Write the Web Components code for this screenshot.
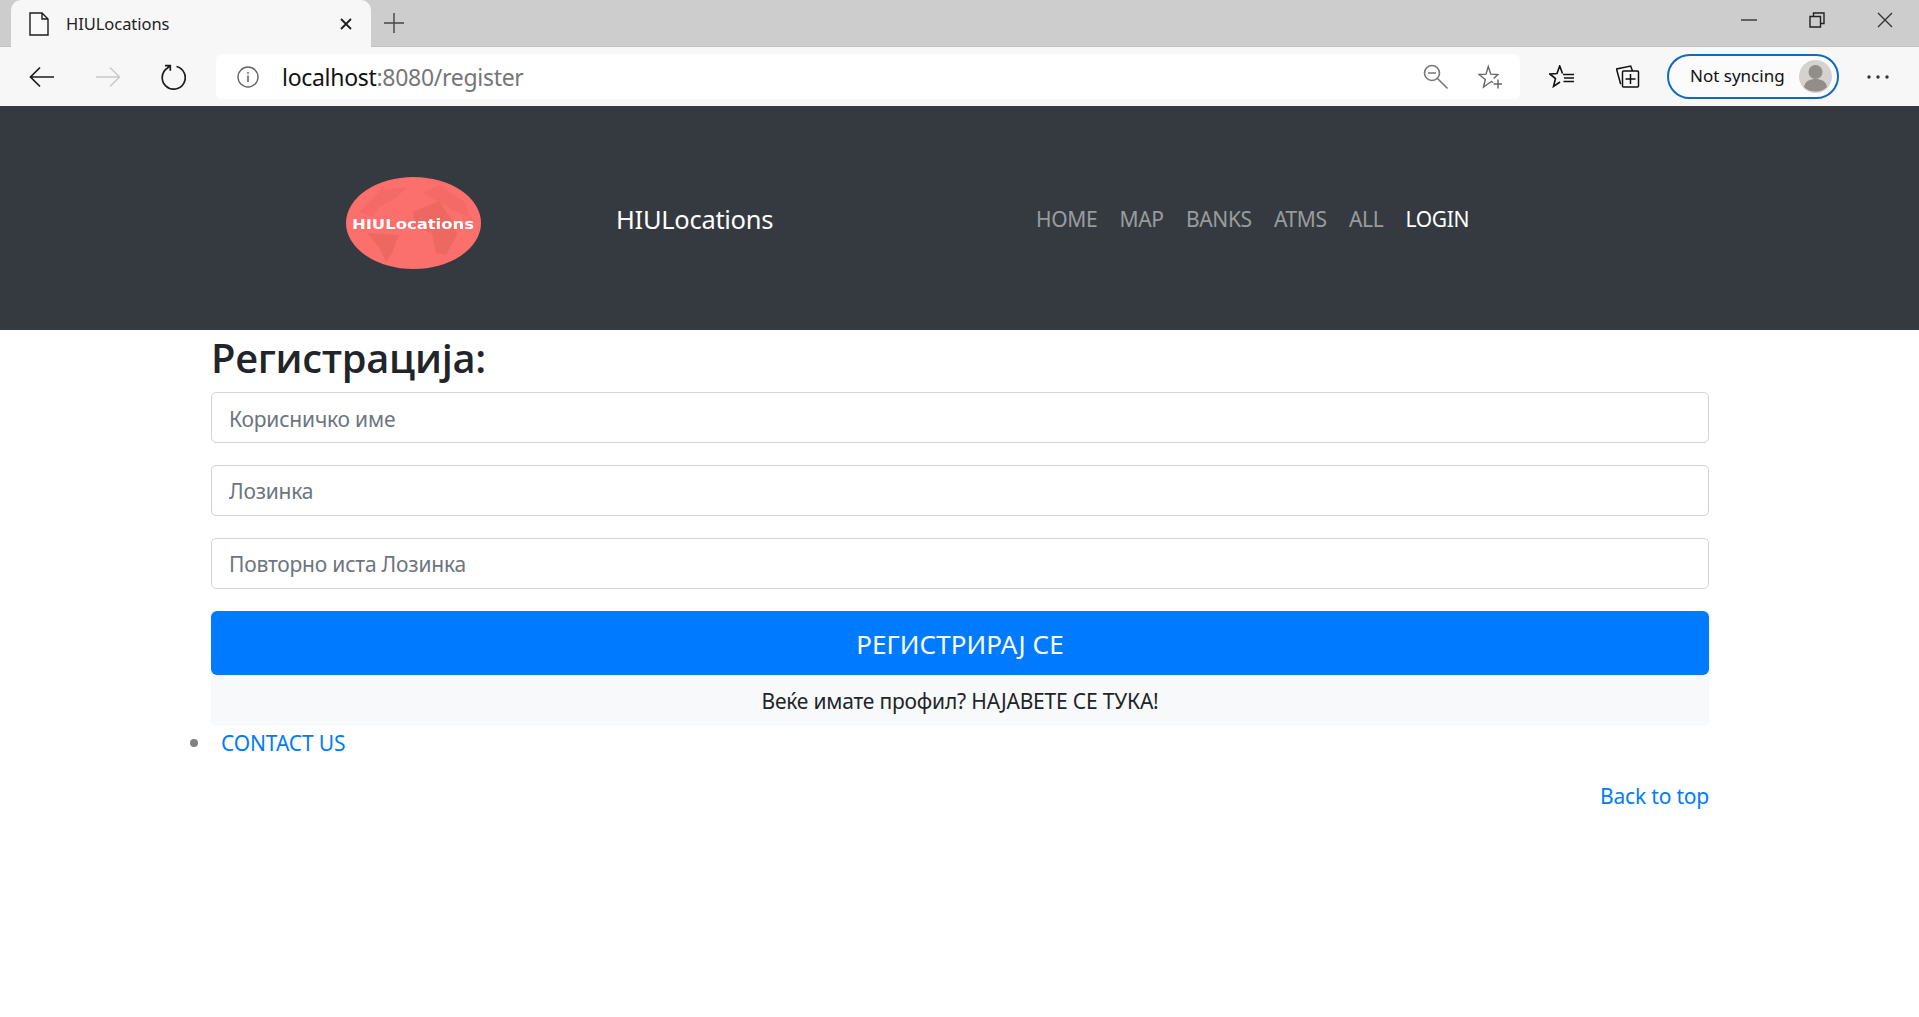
<!DOCTYPE html>
<html>
<head>
<meta charset="utf-8">
<title>HIULocations</title>
<style>
    html, body { margin: 0; padding: 0; background: #fff; }
    body { font-family: "Noto Sans", "Open Sans", sans-serif; color: #212529; overflow: hidden; height: 1017px; }
</style>
</head>
<body>
<browser-chrome></browser-chrome>
<site-nav></site-nav>
<main-page>
    <register-form></register-form>
    <page-footer></page-footer>
</main-page>

<script>
const browserChromeTemplate = document.createElement('template');
browserChromeTemplate.innerHTML = `
<style>
    :host { display: block; height: 106px; background: #f7f7f7; color: #111; }
    svg { display: block; fill: none; stroke: #1c1c1c; stroke-width: 1.4; }
    .strip {
        height: 47px;
        display: flex;
        align-items: flex-end;
        padding-left: 11px;
        background: #cdcdcd;
        border-bottom: 1px solid #c2c2c2;
        box-sizing: border-box;
    }
    .tab {
        width: 360px;
        height: 47px;
        margin-bottom: -1px;
        box-sizing: border-box;
        padding: 0 18px 0 18px;
        display: flex;
        align-items: center;
        background: #f7f7f7;
        border-radius: 10px 10px 0 0;
    }
    .title { margin-left: 17px; flex: 1; font-size: 16.500px; color: #222; letter-spacing: -0.05px; }
    .plus { margin-left: 12px; align-self: center; }
    .win { margin-left: auto; display: flex; align-self: flex-start; }
    .win div { width: 68px; height: 40px; display: flex; align-items: center; justify-content: center; }
    .bar {
        height: 59px;
        display: flex;
        align-items: center;
    }
    .nav-btn { width: 66px; display: flex; justify-content: center; }
    .first { margin-left: 9px; }
    .reload { margin-left: -1px; margin-right: 1px; }
    .url {
        margin-left: 9px;
        width: 1304px;
        height: 45px;
        background: #fff;
        border-radius: 6px;
        display: flex;
        align-items: center;
        box-sizing: border-box;
        padding: 0 18px 0 21px;
    }
    .addr { margin-left: 23px; font-size: 23px; color: #111; flex: 1; letter-spacing: -0.3px; }
    .addr span { color: #767676; }
    .url svg + svg { margin-left: 29px; }
    .tool { width: 66px; display: flex; justify-content: center; }
    .pill {
        margin-left: 6px;
        width: 172px;
        height: 45px;
        box-sizing: border-box;
        border: 2px solid #0f6cbd;
        border-radius: 23px;
        display: flex;
        align-items: center;
        justify-content: space-between;
        padding: 0 5px 0 21px;
        font-size: 17px;
        color: #111;
        background: #fbfbfb;
    }
    .pill span { margin-bottom: 2px; }
    .more { margin-left: 28px; }
</style>
<div class="strip">
    <div class="tab">
        <svg width="20" height="24" viewBox="0 0 20 24"><path d="M1 1h12l6 6v16H1zM13 1v6h6" fill="#fafafa"/></svg>
        <span class="title">HIULocations</span>
        <svg width="14" height="14" viewBox="0 0 14 14" style="stroke-width:1.8"><path d="M2 2l10 10M12 2L2 12"/></svg>
    </div>
    <svg class="plus" width="22" height="22" viewBox="0 0 22 22" style="stroke:#444"><path d="M11 1v20M1 11h20"/></svg>
    <div class="win">
        <div><svg width="16" height="4" viewBox="0 0 16 4" style="stroke:#333"><path d="M0 2h16"/></svg></div>
        <div><svg width="16" height="16" viewBox="0 0 16 16" style="stroke:#222"><path d="M1 4.5h10.5V15H1zM4.5 4.500V1H15v10.500h-3.500"/></svg></div>
        <div><svg width="16" height="16" viewBox="0 0 16 16" style="stroke:#333"><path d="M1 1l14 14M15 1L1 15"/></svg></div>
    </div>
</div>
<div class="bar">
    <div class="nav-btn first"><svg width="26" height="22" viewBox="0 0 26 22"><path d="M25 11H2M11 1.500L1.500 11l9.500 9.500" style="stroke-width:1.700"/></svg></div>
    <div class="nav-btn"><svg width="26" height="22" viewBox="0 0 26 22" style="stroke:#c9c9c9"><path d="M1 11h23M15 1.500l9.500 9.500-9.500 9.500"/></svg></div>
    <div class="nav-btn reload"><svg width="26" height="28" viewBox="0 0 26 28" style="stroke-width:1.700"><path d="M16.500 3.500A11.500 11.500 0 1 1 7.500 5L10.300 2.700M5 2.700h5.300v5"/></svg></div>
    <div class="url">
        <svg width="22" height="22" viewBox="0 0 22 22" style="stroke:#666"><circle cx="11" cy="11" r="10"/><path d="M11 9.500V16M11 6v1.800" style="stroke-width:1.600"/></svg>
        <div class="addr">localhost<span>:8080/register</span></div>
        <svg width="26" height="26" viewBox="0 0 26 26" style="stroke:#777;stroke-width:1.600"><circle cx="9" cy="9" r="7.500"/><path d="M5 9h8M14.500 14.500l10 10"/></svg>
        <svg width="24" height="26" viewBox="0 0 24 26" style="stroke:#666;stroke-width:1.400"><path d="M15 18.500l-1.500-1-3.700 2.500-4.300 3 1.800-7.500L1 10.500l7-.4L10.300 2.500l2.500 7.600 7 .4-4 4"/><path d="M20 15.500v9M15.500 20h9"/></svg>
    </div>
    <div class="tool" style="margin-left:9px"><svg width="26" height="24" viewBox="0 0 26 24" style="stroke:#111;stroke-width:1.600"><path d="M13.500 8.500L10.700 1 8 8.500l-7.200.5 5.700 4.500-2 8 6.500-4.500"/><path d="M14 9.500h11M15 13h10M14.500 16.500h10.500"/></svg></div>
    <div class="tool"><svg width="24" height="24" viewBox="0 0 24 24" style="stroke:#111;stroke-width:1.500"><path d="M4.700 19.300L.5 4 14.700 1l1.800 5"/><rect x="6.500" y="6" width="16" height="16" rx="1"/><path d="M14.500 9v10M9.500 14h10"/></svg></div>
    <div class="pill">
        <span>Not syncing</span>
        <svg width="33" height="33" viewBox="0 0 33 33" style="stroke:none"><circle cx="16.500" cy="16.500" r="16.500" fill="#d3d2ce"/><circle cx="16.500" cy="12" r="7" fill="#918d88"/><path d="M5 27c1-6 6-8 11.500-8S27 21 28 27c-3 3-7 4.500-11.500 4.500S8 30 5 27z" fill="#918d88"/></svg>
    </div>
    <svg class="more" width="22" height="4" viewBox="0 0 22 4" style="stroke:none;fill:#333"><circle cx="2" cy="2" r="1.700"/><circle cx="11" cy="2" r="1.700"/><circle cx="20" cy="2" r="1.700"/></svg>
</div>
`;

class BrowserChrome extends HTMLElement {
    connectedCallback() {
        const shadowRoot = this.attachShadow({ mode: 'open' });
        shadowRoot.appendChild(browserChromeTemplate.content.cloneNode(true));
    }
}
customElements.define('browser-chrome', BrowserChrome);

const siteNavTemplate = document.createElement('template');
siteNavTemplate.innerHTML = `
<style>
    :host {
        display: flex;
        align-items: center;
        height: 224px;
        padding-left: 345px;
        box-sizing: border-box;
        background: #343a40;
        font-size: 21px;
    }
    svg { display: block; margin-top: 9px; }
    .brand { margin: 2px 0 0 134px; font-size: 25.500px; color: #fff; letter-spacing: -0.3px; }
    ul { display: flex; gap: 22.200px; margin: 2px 0 0 263px; padding: 0; list-style: none; letter-spacing: -0.35px; }
    a { color: rgba(255,255,255,.5); text-decoration: none; }
    a.on { color: #fff; }
</style>
<svg width="137" height="94" viewBox="0 0 137 94">
    <defs><filter id="soft"><feGaussianBlur stdDeviation=".4"/></filter></defs>
    <ellipse cx="68.500" cy="47" rx="67.500" ry="46" fill="#fb706c"/>
    <g filter="url(#soft)">
        <path fill="#f36b66" d="M14 36L36 14l26-3-11 11-17 9-7 10z"/>
        <path fill="#f36b66" d="M77 17l17-8 27 18 3 14-17-7-13-8z"/>
        <path fill="#ec6861" d="M68 36l26-11 15 22 3 12-11 20-10-2-4-20-18-6z"/>
        <path fill="#ec6861" d="M22 57l32 2-7 18-6 9-7-15z"/>
    </g>
    <text x="7" y="52.500" textLength="122" lengthAdjust="spacingAndGlyphs" filter="url(#soft)" font-family="DejaVu Sans" font-weight="700" font-size="14" fill="#fff">HIULocations</text>
</svg>
<span class="brand">HIULocations</span>
<ul>
    <li><a href="#">HOME</a></li>
    <li><a href="#">MAP</a></li>
    <li><a href="#">BANKS</a></li>
    <li><a href="#">ATMS</a></li>
    <li><a href="#">ALL</a></li>
    <li><a class="on" href="#">LOGIN</a></li>
</ul>
`;

class SiteNav extends HTMLElement {
    connectedCallback() {
        const shadowRoot = this.attachShadow({ mode: 'open' });
        shadowRoot.appendChild(siteNavTemplate.content.cloneNode(true));
    }
}
customElements.define('site-nav', SiteNav);

const mainPageTemplate = document.createElement('template');
mainPageTemplate.innerHTML = `
<style>
    :host { display: block; width: 1498px; margin: 0 0 0 211px; }
</style>
<slot></slot>
`;

class MainPage extends HTMLElement {
    connectedCallback() {
        const shadowRoot = this.attachShadow({ mode: 'open' });
        shadowRoot.appendChild(mainPageTemplate.content.cloneNode(true));
    }
}
customElements.define('main-page', MainPage);

const registerFormTemplate = document.createElement('template');
registerFormTemplate.innerHTML = `
<style>
    :host { display: block; font-size: 21px; letter-spacing: -0.2px; }
    h2 { margin: 0; height: 62px; font-family: "Open Sans", "Noto Sans", sans-serif; font-size: 39.800px; line-height: 55px; font-weight: 600; color: #212529; letter-spacing: -0.3px; }
    input {
        display: block;
        width: 100%;
        height: 51px;
        margin-bottom: 22px;
        padding: 0 17px;
        box-sizing: border-box;
        border: 1px solid #ced4da;
        border-radius: 5px;
        font: inherit;
        letter-spacing: inherit;
        color: #495057;
        background: #fff;
    }
    input:first-of-type { padding-top: 2px; }
    input::placeholder { color: #6c757d; opacity: 1; }
    button {
        display: block;
        width: 100%;
        height: 64px;
        padding: 2px 0 0;
        border: 0;
        border-radius: 6px;
        background: #007bff;
        color: #fff;
        font: inherit;
        font-size: 26px;
        letter-spacing: 0.05px;
    }
    .note {
        height: 51px;
        line-height: 53px;
        text-align: center;
        background: #f8f9fa;
        border-radius: 0 0 5px 5px;
        color: #212529;
    }
</style>
<h2>Регистрација:</h2>
<input placeholder="Корисничко име">
<input placeholder="Лозинка">
<input placeholder="Повторно иста Лозинка">
<button>РЕГИСТРИРАЈ СЕ</button>
<div class="note">Веќе имате профил? НАЈАВЕТЕ СЕ ТУКА!</div>
`;

class RegisterForm extends HTMLElement {
    connectedCallback() {
        const shadowRoot = this.attachShadow({ mode: 'open' });
        shadowRoot.appendChild(registerFormTemplate.content.cloneNode(true));
    }
}
customElements.define('register-form', RegisterForm);

const pageFooterTemplate = document.createElement('template');
pageFooterTemplate.innerHTML = `
<style>
    :host { display: block; font-size: 21px; line-height: 32px; letter-spacing: -0.2px; }
    ul { margin: 0; padding: 1px 0 0; list-style: none; letter-spacing: -0.12px; }
    li { display: flex; align-items: center; margin-left: -21px; }
    li::before { content: ""; width: 8px; height: 8px; margin-right: 23px; border-radius: 50%; background: #808080; }
    a { color: #007bff; text-decoration: none; }
    p { margin: 21px 0 0; text-align: right; }
</style>
<ul><li><a href="#">CONTACT US</a></li></ul>
<p><a href="#">Back to top</a></p>
`;

class PageFooter extends HTMLElement {
    connectedCallback() {
        const shadowRoot = this.attachShadow({ mode: 'open' });
        shadowRoot.appendChild(pageFooterTemplate.content.cloneNode(true));
    }
}
customElements.define('page-footer', PageFooter);
</script>
</body>
</html>
